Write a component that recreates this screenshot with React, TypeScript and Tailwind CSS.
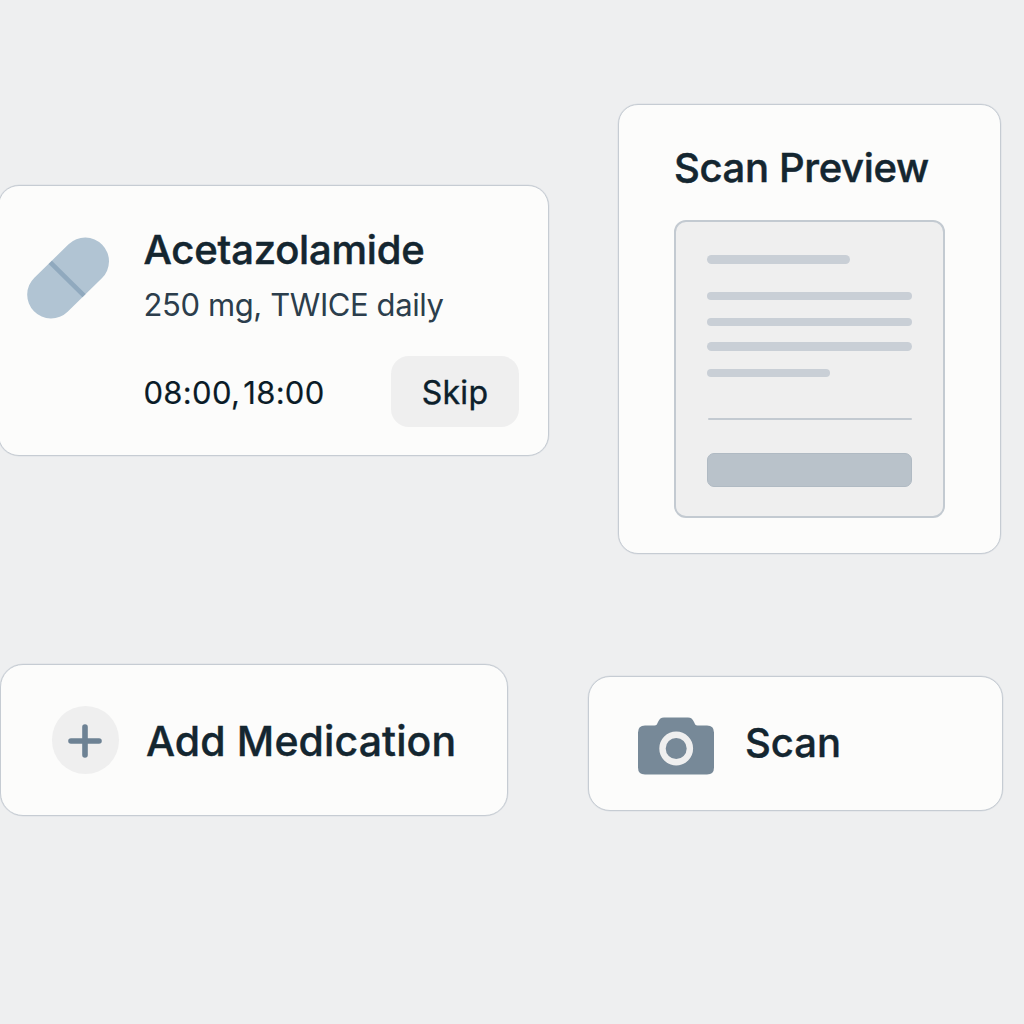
import type { ReactNode } from "react";

function Card({ className, children }: { className: string; children: ReactNode }) {
  return (
    <section
      className={`border border-[#c6ccd3] bg-[#fcfcfb] shadow-[0_0_0_0.5px_#dcdfe3] ${className}`}
    >
      {children}
    </section>
  );
}

function PillIcon() {
  return (
    <svg viewBox="27 237 82 82" className="h-[82px] w-[82px] shrink-0">
      <path d="M51 294.7 85.2 261.3" stroke="#b1c4d3" strokeWidth="47.6" strokeLinecap="round" />
      <path d="M50.3 262.3 84 295.6" stroke="#90a9be" strokeWidth="4.6" />
    </svg>
  );
}

function CameraIcon() {
  return (
    <svg viewBox="0 0 76 58" className="mt-[4px] h-[58px] w-[76px] shrink-0">
      <path
        d="M7 8.5H16.5C18.5 8.5 19 7.5 20 5C21.5 1.8 23 .5 26 .5H50C53 .5 54.5 1.8 56 5C57 7.5 57.5 8.5 59.5 8.5H69Q76 8.5 76 15.5V50.5Q76 57.5 69 57.5H7Q0 57.5 0 50.5V15.5Q0 8.5 7 8.5Z"
        fill="#778998"
      />
      <circle cx="38.2" cy="31.5" r="13.7" fill="none" stroke="#efefef" strokeWidth="6.4" />
    </svg>
  );
}

function MedicationCard() {
  return (
    <Card className="-ml-[2px] flex h-[271px] w-[551px] rounded-[21px] pt-[43px] pr-[29px] pl-[28px]">
      <div className="pt-[7.5px]">
        <PillIcon />
      </div>
      <div className="ml-[34.5px] flex-1 whitespace-nowrap">
        <h2 className="text-[40px] leading-[41px] font-medium tracking-[-0.2px] text-[#142630] [-webkit-text-stroke:0.5px_#142630]">
          Acetazolamide
        </h2>
        <p className="mt-[17px] text-[31px] leading-[36px] tracking-[-0.4px] text-[#2c3e4c]">
          250 mg, TWICE daily
        </p>
        <div className="mt-[33px] flex h-[71px] items-center justify-between">
          <span className="pt-[3px] text-[31px] tracking-[0.3px] [word-spacing:-6px] text-[#0a1b27] [-webkit-text-stroke:0.2px_#0a1b27]">
            08:00, 18:00
          </span>
          <button className="h-[71px] w-[128px] rounded-[18px] bg-[#efefef] pt-[3px] text-[32px] tracking-[0.3px] text-[#0c202b] [-webkit-text-stroke:0.4px_#0c202b]">
            Skip
          </button>
        </div>
      </div>
    </Card>
  );
}

function ScanPreviewCard() {
  return (
    <Card className="ml-[30px] flex h-[450px] w-[383px] flex-col rounded-[20px] pt-[43px] pl-[55px]">
      <h2 className="text-[40px] leading-[40px] font-medium tracking-[-0.35px] whitespace-nowrap text-[#142630] [-webkit-text-stroke:0.5px_#142630]">
        Scan Preview
      </h2>
      <div className="mt-[32px] flex h-[298px] w-[271px] flex-col rounded-[12px] border-2 border-[#c3cad1] bg-[#efefef] px-[31px] pt-[33px]">
        <div className="h-[9px] w-[143px] rounded-full bg-[#c9cfd6]" />
        <div className="mt-[28px] h-[8px] rounded-full bg-[#c9cfd6]" />
        <div className="mt-[18px] h-[8px] rounded-full bg-[#c9cfd6]" />
        <div className="mt-[16px] h-[9px] rounded-full bg-[#c9cfd6]" />
        <div className="mt-[18px] h-[8px] w-[123px] rounded-full bg-[#c9cfd6]" />
        <div className="mt-[40.5px] ml-px h-[2px] rounded-full bg-[#c3cad1]" />
        <div className="mt-[33.5px] h-[34px] rounded-[7px] border border-[#b0bac3] bg-[#b9c2ca]" />
      </div>
    </Card>
  );
}

export default function App() {
  return (
    <main className="flex h-[1024px] w-[1024px] overflow-hidden bg-[#eeeff0] font-['Inter',sans-serif]">
      <div className="w-[588px] shrink-0 pt-[185px]">
        <MedicationCard />
        <Card className="mt-[208px] flex h-[152px] w-[508px] items-center rounded-[23px] pl-[51px]">
          <div className="flex h-[68px] w-[67px] shrink-0 items-center justify-center rounded-full bg-[#efefef]">
            <svg viewBox="0 0 34 34" className="mt-[2px] mr-px h-[34px] w-[34px]">
              <path d="M17 3V31M3 17H31" stroke="#6d8294" strokeWidth="5.6" strokeLinecap="round" />
            </svg>
          </div>
          <h2 className="mt-[2px] ml-[27px] text-[41px] leading-[48px] font-medium tracking-[0.12px] whitespace-nowrap text-[#142630] [-webkit-text-stroke:0.4px_#142630]">
            Add Medication
          </h2>
        </Card>
      </div>
      <div className="shrink-0 pt-[104px]">
        <ScanPreviewCard />
        <Card className="mt-[122px] flex h-[135px] w-[415px] items-center rounded-[22px] pl-[49px]">
          <CameraIcon />
          <h2 className="-mt-px ml-[31px] text-[40px] leading-[48px] font-medium text-[#142630] [-webkit-text-stroke:0.4px_#142630]">
            Scan
          </h2>
        </Card>
      </div>
    </main>
  );
}
